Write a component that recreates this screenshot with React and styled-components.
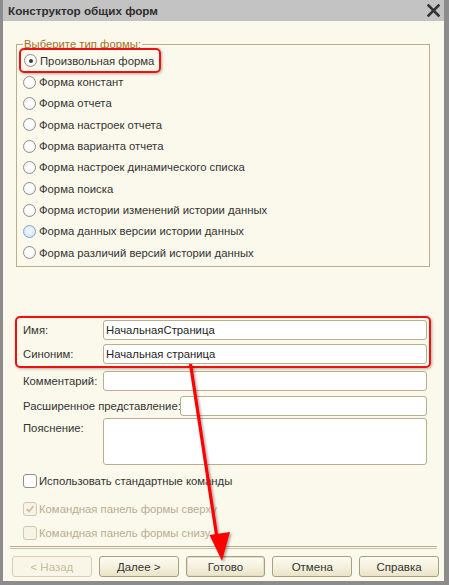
import React from 'react';
import styled, { createGlobalStyle, css } from 'styled-components';

const GlobalStyle = createGlobalStyle`
	html, body {
		margin: 0;
		padding: 0;
		background: #ffffff;
	}
	body {
		font-family: "Liberation Sans", Arial, sans-serif;
		font-size: 11.3px;
		color: #333333;
	}
`;

const Window = styled.div`
	position: relative;
	box-sizing: border-box;
	width: 449px;
	height: 585px;
	display: flex;
	flex-direction: column;
	background: #fbf9eb;
	border-left: 3px solid #8c8c8c;
	border-right: 5px solid #8c8c8c;
	border-bottom: 4px solid #8c8c8c;
	overflow: hidden;
`;

const TitleBar = styled.div`
	height: 21px;
	margin-left: -3px;
	margin-right: -5px;
	padding: 0 9px 0 8px;
	display: flex;
	align-items: center;
	justify-content: space-between;
	background: #c3c3c3;
	flex-shrink: 0;
`;

const Title = styled.span`
	font-size: 11.7px;
	font-weight: bold;
	color: #2e2e2e;
`;

const CloseIcon = () => (
	<svg width="13" height="13" viewBox="0 0 13 13">
		<path d="M1.5 1.5 L11.5 11.5 M11.5 1.5 L1.5 11.5" stroke="#333" strokeWidth="2.6" strokeLinecap="square" />
	</svg>
);

const Body = styled.div`
	flex: 1;
	display: flex;
	flex-direction: column;
	padding: 17px 0 0 0;
`;

const Group = styled.fieldset`
	margin: 0 14px 0 13px;
	padding: 0 0 3px 6px;
	border: 1px solid #b9af8f;
	min-width: 0;
`;

const Legend = styled.legend`
	padding: 0 1px;
	color: #a8722a;
`;

const RadioRow = styled.label`
	height: 21.35px;
	display: flex;
	align-items: center;
	gap: 3px;
	white-space: nowrap;
`;

const Marked = styled.div`
	display: inline-flex;
	align-self: flex-start;
	margin: -2px 0 -2px -4px;
	padding: 0 5px 0 3px;
	border: 2px solid #f01010;
	border-radius: 5px;
	box-shadow: 1px 1px 3px rgba(0, 0, 0, 0.3);
`;

const Radio = styled.span`
	box-sizing: border-box;
	width: 13px;
	height: 13px;
	border-radius: 50%;
	border: 1px solid #8f8f8f;
	background: radial-gradient(circle at 50% 40%, #ffffff 30%, #ecebe6 100%);
	position: relative;
	flex-shrink: 0;
	${p => p.hover && css`
		border-color: #86a3c9;
		background: radial-gradient(circle at 50% 40%, #eef4fc 20%, #c9dbf2 100%);
	`}
	${p => p.checked && css`
		&::after {
			content: '';
			position: absolute;
			left: 3.5px;
			top: 3.5px;
			width: 4px;
			height: 4px;
			border-radius: 50%;
			background: #3a3a3a;
		}
	`}
`;

const Spacer = styled.div`
	height: 50px;
`;

const Fields = styled.div`
	display: flex;
	flex-direction: column;
	padding: 0 17px 0 20px;
`;

const FieldRow = styled.div`
	display: flex;
	align-items: ${p => (p.top ? 'flex-start' : 'center')};
	height: ${p => p.h || 25}px;
`;

const Label = styled.span`
	width: ${p => p.w || 80}px;
	flex-shrink: 0;
	white-space: nowrap;
	padding-top: ${p => (p.top ? 4 : 0)}px;
`;

const Input = styled.div`
	box-sizing: border-box;
	flex: 1;
	height: ${p => p.h || 20}px;
	background: #ffffff;
	border: 1px solid #b9af8f;
	border-radius: 3px;
	padding: 0 2px;
	display: flex;
	align-items: ${p => (p.h ? 'flex-start' : 'center')};
	color: #1e1e1e;
`;

const Highlight = styled.div`
	display: flex;
	flex-direction: column;
	margin: -1px -4px 0 -8px;
	padding: 0 2px 0 6px;
	border: 2px solid #f01010;
	border-radius: 5px;
	box-shadow: 1px 1px 3px rgba(0, 0, 0, 0.3);
	${FieldRow} {
		height: 24px;
	}
`;

const CheckRow = styled.label`
	display: flex;
	align-items: center;
	gap: 2px;
	height: ${p => p.h || 24}px;
	color: ${p => (p.disabled ? '#b7ad92' : '#333')};
`;

const Box = styled.span`
	box-sizing: border-box;
	width: 14px;
	height: 14px;
	border: 1px solid ${p => (p.disabled ? '#cfc8b2' : '#8f8f8f')};
	border-radius: 3px;
	background: ${p => (p.disabled ? '#f7f4e6' : '#ffffff')};
	display: inline-flex;
	align-items: center;
	justify-content: center;
	flex-shrink: 0;
`;

const Separator = styled.div`
	margin: 3px 7px 0 7px;
	height: 1px;
	border-top: 1px solid #b9af8f;
	border-bottom: 1px solid #c9c1a3;
	flex-shrink: 0;
`;

const ButtonBar = styled.div`
	display: flex;
	gap: 7px;
	padding: 7px 5px 0 9px;
`;

const Button = styled.button`
	width: 80px;
	height: 21px;
	padding: 0;
	font-family: inherit;
	font-size: 11.5px;
	color: ${p => (p.disabled ? '#c6bc9f' : '#333')};
	border: 1px solid ${p => (p.disabled ? '#d6cfb7' : '#a89f80')};
	border-radius: 3px;
	background: ${p => (p.disabled
		? '#f9f6e8'
		: 'linear-gradient(to bottom, #fdfcf4 0%, #f4f0dc 55%, #e9e3c8 100%)')};
	box-shadow: ${p => (p.active ? 'inset 0 0 0 1px #e4ddc2' : 'none')};
`;

const Arrow = styled.svg`
	position: absolute;
	left: -3px;
	top: 0;
	pointer-events: none;
`;

const types = [
	'Форма констант',
	'Форма отчета',
	'Форма настроек отчета',
	'Форма варианта отчета',
	'Форма настроек динамического списка',
	'Форма поиска',
	'Форма истории изменений истории данных',
	'Форма данных версии истории данных',
	'Форма различий версий истории данных',
];

export default function App() {
	return (
		<>
			<GlobalStyle />
			<Window>
				<TitleBar>
					<Title>Конструктор общих форм</Title>
					<CloseIcon />
				</TitleBar>
				<Body>
					<Group>
						<Legend>Выберите тип формы:</Legend>
						<Marked>
							<RadioRow>
								<Radio checked />
								Произвольная форма
							</RadioRow>
						</Marked>
						{types.map(t => (
							<RadioRow key={t}>
								<Radio hover={t === 'Форма данных версии истории данных'} />
								{t}
							</RadioRow>
						))}
					</Group>
					<Spacer />
					<Fields>
						<Highlight>
							<FieldRow>
								<Label>Имя:</Label>
								<Input>НачальнаяСтраница</Input>
							</FieldRow>
							<FieldRow>
								<Label>Синоним:</Label>
								<Input>Начальная страница</Input>
							</FieldRow>
						</Highlight>
						<FieldRow>
							<Label>Комментарий:</Label>
							<Input />
						</FieldRow>
						<FieldRow>
							<Label w={157}>Расширенное представление:</Label>
							<Input />
						</FieldRow>
						<FieldRow top h={49}>
							<Label top>Пояснение:</Label>
							<Input h={47} />
						</FieldRow>
						<CheckRow h={28}>
							<Box />
							Использовать стандартные команды
						</CheckRow>
						<CheckRow disabled h={28}>
							<Box disabled>
								<svg width="10" height="10" viewBox="0 0 10 10">
									<path d="M1.5 5 L4 7.5 L8.5 2" stroke="#cbc3a8" strokeWidth="1.8" fill="none" />
								</svg>
							</Box>
							Командная панель формы сверху
						</CheckRow>
						<CheckRow disabled h={20}>
							<Box disabled />
							Командная панель формы снизу
						</CheckRow>
					</Fields>
					<Separator />
					<ButtonBar>
						<Button disabled>&lt; Назад</Button>
						<Button>Далее &gt;</Button>
						<Button active>Готово</Button>
						<Button>Отмена</Button>
						<Button>Справка</Button>
					</ButtonBar>
				</Body>
				<Arrow width="449" height="585" viewBox="0 0 449 585">
					<defs>
						<filter id="sh" x="-20%" y="-20%" width="140%" height="140%">
							<feDropShadow dx="1.5" dy="1.5" stdDeviation="1.2" floodColor="#000" floodOpacity="0.35" />
						</filter>
					</defs>
					<g filter="url(#sh)">
						<line x1="190.5" y1="364" x2="217" y2="538" stroke="#ff0000" strokeWidth="3.2" />
						<polygon points="209.5,535 230,532 222,561" fill="#ff0000" />
					</g>
				</Arrow>
			</Window>
		</>
	);
}
